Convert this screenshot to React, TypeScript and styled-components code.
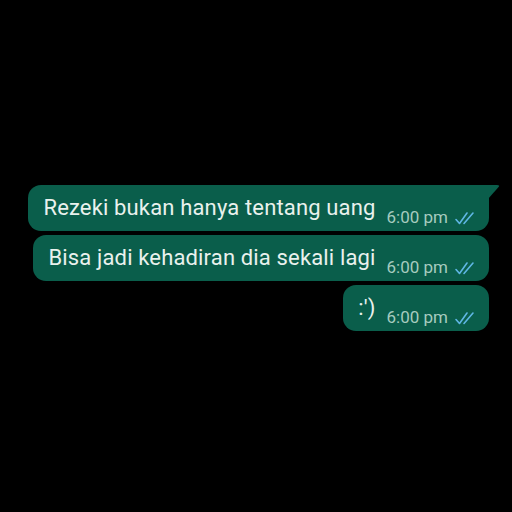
import React from "react";
import styled, { createGlobalStyle } from "styled-components";

const Global = createGlobalStyle`
  html, body { margin: 0; padding: 0; background: #000; }
  body { font-family: Roboto, "Noto Sans", Arial, sans-serif; }
`;

const Page = styled.div`
  width: 512px;
  height: 512px;
  background: #000;
  display: flex;
  flex-direction: column;
  align-items: flex-end;
  gap: 4px;
  padding: 185px 23px 0 0;
  box-sizing: border-box;
`;

const Bubble = styled.div<{ $tail?: boolean }>`
  position: relative;
  display: flex;
  align-items: flex-end;
  height: 46px;
  box-sizing: border-box;
  padding: 0 11px 4px 15px;
  background: #0a5e4b;
  border-radius: 13px;
  ${(p) => (p.$tail ? "border-top-right-radius: 0;" : "")}
  ${(p) =>
    p.$tail
      ? `&::after {
          content: "";
          position: absolute;
          top: 0;
          right: -11px;
          width: 12px;
          height: 14px;
          background: #0a5e4b;
          clip-path: polygon(0 0, 100% 0, 88% 14%, 0 100%);
          border-top-right-radius: 3px;
        }`
      : ""}
`;

const Text = styled.span`
  font-size: 22px;
  letter-spacing: 0.15px;
  line-height: 24px;
  color: #e9f1ed;
  margin-bottom: 7px;
  white-space: nowrap;
`;

const Meta = styled.span`
  display: flex;
  align-items: center;
  gap: 6px;
  margin-left: 11px;
  font-size: 17px;
  line-height: 20px;
  color: #a6cbbf;
  white-space: nowrap;
`;

const Ticks = () => (
  <svg width="24" height="14" viewBox="0 0 24 14" fill="none" style={{ marginTop: 2 }}>
    <path d="M2 8.5 L5.5 12.5 L13 2" stroke="#5fb6e4" strokeWidth="1.6" strokeLinecap="round" strokeLinejoin="round" />
    <path d="M10 12.5 L19 2" stroke="#5fb6e4" strokeWidth="1.6" strokeLinecap="round" />
  </svg>
);

const messages = [
  { text: "Rezeki bukan hanya tentang uang", tail: true },
  { text: "Bisa jadi kehadiran dia sekali lagi", tail: false },
  { text: ":')", tail: false },
];

export default function App() {
  return (
    <>
      <Global />
      <Page>
        {messages.map((m, i) => (
          <Bubble key={i} $tail={m.tail}>
            <Text>{m.text}</Text>
            <Meta>
              6:00 pm
              <Ticks />
            </Meta>
          </Bubble>
        ))}
      </Page>
    </>
  );
}
